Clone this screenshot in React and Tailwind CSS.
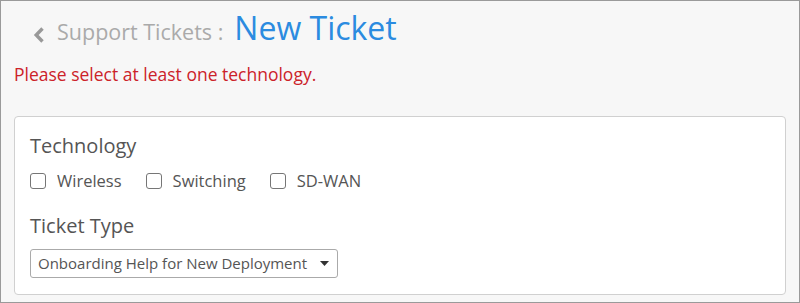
import React from 'react';

function Check({ label }) {
  return (
    <label className="flex items-center gap-[11px] text-[16.5px] text-[#555] leading-[24px]">
      <span className="w-[16px] h-[16px] rounded-[3px] border border-[#767676] bg-white" />
      {label}
    </label>
  );
}

export default function App() {
  return (
    <div className="w-[800px] h-[303px] border border-[#9a9a9a] bg-[#f7f7f7] overflow-hidden font-['Open_Sans','Liberation_Sans',sans-serif]">
      <div className="flex items-baseline pl-[32px] pt-[11px] h-[43px]">
        <svg width="12" height="16" viewBox="0 0 12 16" className="mr-[12px] self-start mt-[15px]">
          <path d="M9.5 1.5 L3.2 8 L9.5 14.5" fill="none" stroke="#999" strokeWidth="3.4" />
        </svg>
        <span className="text-[21.5px] leading-[24px] text-[#aaa]">Support Tickets :</span>
        <span className="text-[32px] leading-[32px] text-[#2b8be0] ml-[11px]">New Ticket</span>
      </div>
      <div className="pl-[13px] mt-[18px] text-[17.5px] leading-[24px] text-[#cc2229]">Please select at least one technology.</div>
      <div className="mx-[13px] mt-[30px] h-[179px] bg-white border border-[#d0d0d0] rounded-[4px] px-[15px] pt-[15px]">
        <div className="text-[20px] text-[#555] leading-[28px]">Technology</div>
        <div className="flex gap-[24px] mt-[9px]">
          <Check label="Wireless" />
          <Check label="Switching" />
          <Check label="SD-WAN" />
        </div>
        <div className="text-[20px] text-[#555] leading-[28px] mt-[19px]">Ticket Type</div>
        <div className="mt-[9px] w-[308px] h-[29px] border border-[#aaa] rounded-[3px] flex items-center justify-between pl-[7px] pr-[8px] text-[15px] text-[#555]">
          <span>Onboarding Help for New Deployment</span>
          <svg width="9" height="5" viewBox="0 0 9 5"><path d="M0 0 H9 L4.5 5 Z" fill="#333" /></svg>
        </div>
      </div>
    </div>
  );
}
